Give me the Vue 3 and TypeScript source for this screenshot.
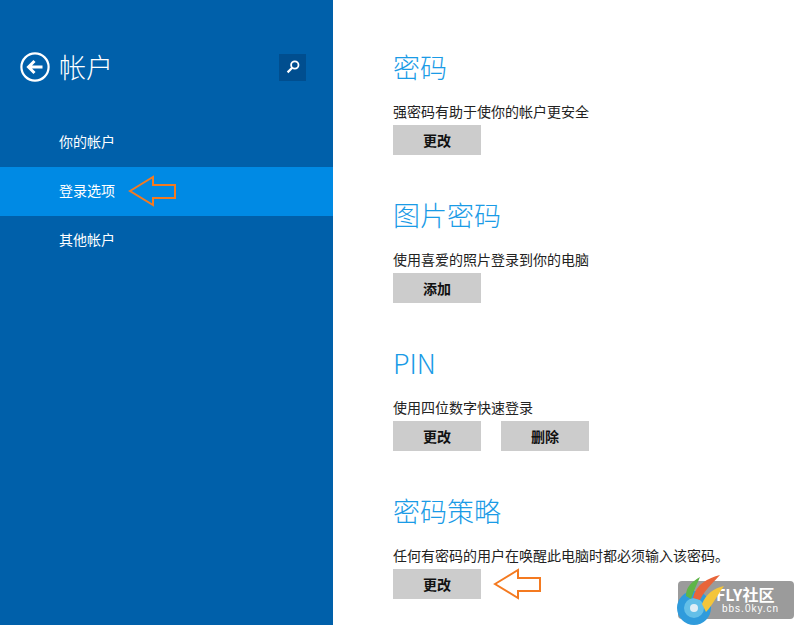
<script setup lang="ts">
interface Section {
  title: string
  desc: string
  buttons: string[]
}

const navItems = ['你的帐户', '登录选项', '其他帐户']
const activeNav = '登录选项'

const sections: Section[] = [
  { title: '密码', desc: '强密码有助于使你的帐户更安全', buttons: ['更改'] },
  { title: '图片密码', desc: '使用喜爱的照片登录到你的电脑', buttons: ['添加'] },
  { title: 'PIN', desc: '使用四位数字快速登录', buttons: ['更改', '删除'] },
  { title: '密码策略', desc: '任何有密码的用户在唤醒此电脑时都必须输入该密码。', buttons: ['更改'] },
]
</script>

<template>
  <div class="page">
    <aside class="sidebar">
      <header class="side-head">
        <svg class="back" width="32" height="32" viewBox="0 0 32 32">
          <circle cx="16" cy="16" r="13.6" fill="none" stroke="#fff" stroke-width="2.2" />
          <path d="M23.5 16H10M15.5 10l-6 6 6 6" fill="none" stroke="#fff" stroke-width="3" />
        </svg>
        <h1>帐户</h1>
        <button class="search" aria-label="搜索">
          <svg width="16" height="16" viewBox="0 0 16 16">
            <circle cx="9.8" cy="6" r="3.7" fill="none" stroke="#fff" stroke-width="1.8" />
            <path d="M7.2 8.8 2.6 13.4" stroke="#fff" stroke-width="2.2" />
          </svg>
        </button>
      </header>
      <nav class="nav">
        <div v-for="item in navItems" :key="item" class="nav-item" :class="{ active: item === activeNav }">
          {{ item }}
        </div>
      </nav>
    </aside>

    <main class="content">
      <section v-for="s in sections" :key="s.title" class="section">
        <h2>{{ s.title }}</h2>
        <p>{{ s.desc }}</p>
        <div class="actions">
          <button v-for="b in s.buttons" :key="b" class="btn">{{ b }}</button>
        </div>
      </section>
    </main>

    <!-- 截图上的标注箭头 -->
    <svg class="arrow arrow-nav" width="50" height="32" viewBox="0 0 50 32">
      <path d="M2 16 25 2v8h22v13H25v7z" fill="none" stroke="#f47a20" stroke-width="2" />
    </svg>
    <svg class="arrow arrow-btn" width="50" height="32" viewBox="0 0 50 32">
      <path d="M2 16 25 2v8h22v13H25v7z" fill="#fff" stroke="#f47a20" stroke-width="2" />
    </svg>

    <div class="watermark">
      <div class="wm-bar">
        <span class="wm-name">FLY社区</span>
        <span class="wm-url">bbs.0ky.cn</span>
      </div>
      <svg class="wm-logo" width="56" height="62" viewBox="0 0 56 62">
        <circle cx="18" cy="42" r="17" fill="#2f9bdc" />
        <circle cx="18" cy="42" r="10" fill="#63bfe8" />
        <circle cx="18" cy="42" r="4" fill="#dfeef6" />
        <path d="M10 30C10 20 16 16 24 11 21 18 18 24 15 33z" fill="#5fb548" />
        <path d="M17 32C20 18 32 12 44 9 38 16 30 22 24 34z" fill="#e8653a" />
        <path d="M26 38C30 28 38 22 48 20 42 28 36 40 30 46z" fill="#f4c53a" />
      </svg>
    </div>
  </div>
</template>

<style>
html,
body {
  margin: 0;
  background: #fff;
}
</style>

<style scoped>
.page {
  position: relative;
  display: flex;
  width: 800px;
  height: 625px;
  overflow: hidden;
  background: #fff;
  font-family: "Noto Sans CJK SC", "Liberation Sans", sans-serif;
}

.sidebar {
  width: 333px;
  flex-shrink: 0;
  background: #0060aa;
  color: #fff;
}

.side-head {
  display: flex;
  align-items: center;
  height: 118px;
  padding: 16px 27px 0 19px;
  box-sizing: border-box;
}

.side-head h1 {
  margin: 0 0 0 8px;
  font-size: 27px;
  font-weight: 300;
  line-height: 36px;
}

.search {
  display: flex;
  align-items: center;
  justify-content: center;
  width: 27px;
  height: 27px;
  margin-left: auto;
  padding: 0;
  border: none;
  background: #004e8f;
}

.nav-item {
  height: 49px;
  padding-left: 59px;
  font-size: 14px;
  line-height: 46px;
}

.nav-item.active {
  background: #008ae4;
}

.content {
  flex: 1;
  padding: 47px 0 0 60px;
}

.section {
  height: 148px;
}

.section h2 {
  margin: 0;
  color: #1a9be6;
  font-size: 27px;
  font-weight: 300;
  line-height: 40px;
}

.section p {
  margin: 14px 0 0;
  color: #222;
  font-size: 14px;
  line-height: 20px;
}

.actions {
  display: flex;
  gap: 20px;
  margin-top: 4px;
}

.btn {
  width: 88px;
  height: 30px;
  padding: 0;
  border: none;
  background: #ccc;
  color: #111;
  font-family: inherit;
  font-size: 14px;
  font-weight: 700;
}

.arrow {
  position: absolute;
}

.arrow-nav {
  left: 128px;
  top: 175px;
}

.arrow-btn {
  left: 493px;
  top: 568px;
}

.watermark {
  position: absolute;
  left: 676px;
  top: 566px;
  width: 120px;
  height: 58px;
}

.wm-bar {
  position: absolute;
  left: 2px;
  top: 15px;
  width: 116px;
  height: 38px;
  border-radius: 4px;
  background: #9b9b9b;
  color: #fff;
}

.wm-name {
  position: absolute;
  left: 38px;
  top: 3px;
  font-size: 16px;
  font-weight: 700;
  line-height: 20px;
  white-space: nowrap;
}

.wm-url {
  position: absolute;
  left: 44px;
  top: 22px;
  font-family: "Liberation Sans", sans-serif;
  font-size: 10px;
  letter-spacing: 1px;
  line-height: 12px;
  white-space: nowrap;
}

.wm-logo {
  position: absolute;
  left: 0;
  top: 0;
}
</style>
